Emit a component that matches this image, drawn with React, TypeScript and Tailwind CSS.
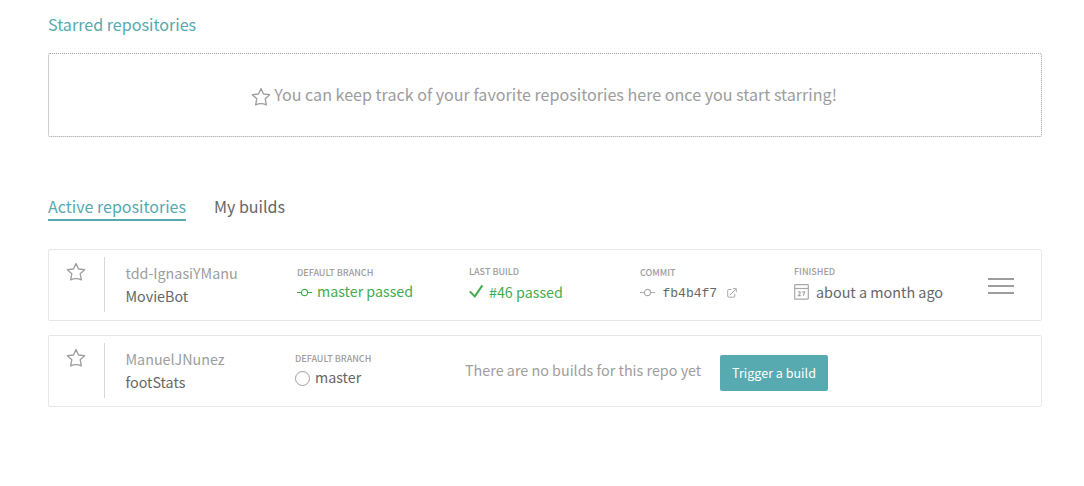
import type { ReactNode } from "react";

function Star() {
  return (
    <svg width="20" height="20" viewBox="0 0 20 20" fill="none" stroke="#9d9d9d" strokeWidth="1.3" strokeLinejoin="round" className="shrink-0">
      <path d="M10 1.5 L12.5 7 L18.6 7.7 L14.2 11.8 L15.4 17.9 Q10 15.2 4.6 17.9 L5.8 11.8 L1.4 7.7 L7.5 7 Z" />
    </svg>
  );
}

function CommitIcon({ color }: { color: string }) {
  return (
    <svg width="15" height="16" viewBox="0 0 15 16" fill="none" stroke={color} strokeWidth="1.1" className="shrink-0">
      <circle cx="7.5" cy="8.5" r="3.1" />
      <path d="M0 8.5h4.4M10.6 8.5H15" />
    </svg>
  );
}

function CheckIcon() {
  return (
    <svg width="15" height="16" viewBox="0 0 15 16" fill="none" stroke="#43ac50" strokeWidth="2" className="shrink-0">
      <path d="M0.8 7.4 L5.8 12.4 L13.4 1.4" />
    </svg>
  );
}

function ExternalIcon() {
  return (
    <svg width="10" height="10" viewBox="0 0 10 10" fill="none" stroke="#a8a8a8" strokeWidth="1" className="shrink-0">
      <path d="M4.5 1.5H1.8Q0.7 1.5 0.7 2.6V8Q0.7 9.2 1.8 9.2H6.6Q7.8 9.2 7.8 8V5.8M3 7L8.8 1.2M5.8 0.7H9.3V4.2" />
    </svg>
  );
}

function CalendarIcon() {
  return (
    <svg width="15" height="16" viewBox="0 0 15 16" fill="none" stroke="#a8a8a8" strokeWidth="1.2" className="shrink-0">
      <rect x="0.7" y="0.7" width="13.6" height="14.4" rx="0.5" />
      <path d="M0.7 4.5H14.3" />
      <path d="M4.2 8.2Q6.3 7 6.3 8.5Q6.3 9.6 4.4 11.6H6.8M8.2 7.9H10.7L9.3 11.8" />
    </svg>
  );
}

function Label({ children }: { children: ReactNode }) {
  return <div className="h-[14px] whitespace-nowrap text-[9px] font-medium leading-[14px] text-[#9d9d9d]">{children}</div>;
}

function RepoCard({ owner, name, children }: { owner: string; name: string; children: ReactNode }) {
  return (
    <li className="flex h-[72px] rounded-[2px] border border-[#e7e7e7]">
      <div className="mt-[7px] flex h-[55px] w-[56px] shrink-0 justify-center border-r border-[#d8d8d8] pr-[1px] pt-[5px]">
        <Star />
      </div>
      <div className="w-[169px] shrink-0 pl-[20.5px] pt-[11px] text-[14.3px] leading-[23px]">
        <div className="text-[#9d9d9d]">{owner}</div>
        <div className="text-[#666]">{name}</div>
      </div>
      {children}
    </li>
  );
}

export default function App() {
  return (
    <main className="h-[486px] whitespace-nowrap bg-white pl-[48px] pr-[42px] font-['Noto_Sans_CJK_SC','Noto_Sans',sans-serif] text-[#666]">
      <h2 className="h-[53px] pt-[12px] text-[16.1px] leading-[24px] text-[#56aab0]">Starred repositories</h2>
      <section className="flex h-[84px] items-center justify-center rounded-[2px] border border-dotted border-[#9d9d9d] pr-[2px] text-[16.1px] leading-[24px] text-[#9d9d9d]">
        <div className="pt-[3px]"><Star /></div>
        <p className="pb-[2px] pl-[3px]">You can keep track of your favorite repositories here once you start starring!</p>
      </section>
      <nav className="flex h-[112px] gap-[28px] pt-[57px] text-[16.05px] leading-[24px]">
        <a className="h-[27px] border-b-2 border-[#56aab0] text-[#56aab0]">Active repositories</a>
        <a>My builds</a>
      </nav>
      <ul className="flex flex-col gap-[14px]">
        <RepoCard owner="tdd-IgnasiYManu" name="MovieBot">
          <div className="w-[195px] shrink-0 pl-[23px] pt-[16px]">
            <Label>DEFAULT BRANCH</Label>
            <div className="flex h-[23px] items-center gap-[5px] text-[14.25px] text-[#43ac50]">
              <CommitIcon color="#43ac50" />
              <span className="pb-[2px]">master passed</span>
            </div>
          </div>
          <div className="w-[171px] shrink-0 pt-[15px]">
            <Label>LAST BUILD</Label>
            <div className="flex h-[26px] items-center gap-[5px] text-[14.3px] text-[#43ac50]">
              <CheckIcon />
              <span>#46 passed</span>
            </div>
          </div>
          <div className="w-[154px] shrink-0 pt-[16px]">
            <Label>COMMIT</Label>
            <div className="flex h-[24px] items-center">
              <CommitIcon color="#adadad" />
              <span className="pl-[7.5px] pr-[10px] pt-[3px] font-['Liberation_Mono',monospace] text-[13px]">fb4b4f7</span>
              <div className="pt-[1px]"><ExternalIcon /></div>
            </div>
          </div>
          <div className="w-[194px] shrink-0 pt-[15px]">
            <Label>FINISHED</Label>
            <div className="flex h-[26px] items-center gap-[7px] text-[14.35px]">
              <CalendarIcon />
              <span>about a month ago</span>
            </div>
          </div>
          <div className="flex w-[26px] flex-col gap-[5px] pt-[28px]">
            <div className="h-[2px] bg-[#9d9d9d]" />
            <div className="h-[2px] bg-[#9d9d9d]" />
            <div className="h-[2px] bg-[#9d9d9d]" />
          </div>
        </RepoCard>
        <RepoCard owner="ManuelJNunez" name="footStats">
          <div className="w-[191px] shrink-0 pl-[21px] pt-[16px]">
            <Label>DEFAULT BRANCH</Label>
            <div className="flex h-[23px] items-center gap-[5px] text-[14.25px]">
              <svg width="15" height="15" viewBox="0 0 15 15" fill="none" stroke="#9d9d9d" className="mt-[2px] shrink-0">
                <circle cx="7.5" cy="7.5" r="7" />
              </svg>
              <span className="pb-[2px]">master</span>
            </div>
          </div>
          <p className="w-[255px] shrink-0 pt-[22px] text-[14.35px] leading-[23px] text-[#9d9d9d]">There are no builds for this repo yet</p>
          <button className="mt-[19px] h-[36px] w-[108px] shrink-0 rounded-[2px] bg-[#56aab0] text-[12.55px] text-white">Trigger a build</button>
        </RepoCard>
      </ul>
    </main>
  );
}
